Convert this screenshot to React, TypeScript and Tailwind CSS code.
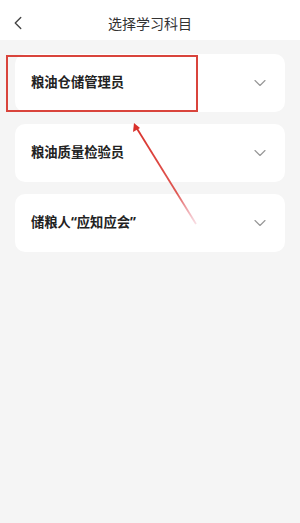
import { ChevronDown, ChevronLeft } from "lucide-react";

const subjects = ["粮油仓储管理员", "粮油质量检验员", "储粮人“应知应会”"];

export default function App() {
  return (
    <div
      className="relative w-full min-h-[523px] bg-[#f5f5f5]"
      style={{ fontFamily: '"Noto Sans", "Noto Sans CJK SC", sans-serif' }}
    >
      <div className="relative h-[40px] bg-white flex items-center justify-center">
        <ChevronLeft className="absolute left-[7px] top-[12px] w-[22px] h-[22px] text-[#444]" strokeWidth={1.5} />
        <span className="text-[14px] text-[#333] mt-[6px]">选择学习科目</span>
      </div>

      <div className="flex flex-col gap-[12px] px-[15px] pt-[14px]">
        {subjects.map((s) => (
          <div key={s} className="h-[58px] rounded-[10px] bg-white flex items-center justify-between pl-[16px] pr-[15px]">
            <span className="text-[13.3px] font-bold text-[#222]">{s}</span>
            <ChevronDown className="w-[20px] h-[20px] text-[#999]" strokeWidth={1.4} />
          </div>
        ))}
      </div>

      {/* annotation: red box + arrow */}
      <div className="absolute left-[6px] top-[55px] w-[192px] h-[57px] border-2 border-[#d9443c]" />
      <svg className="absolute left-0 top-0 pointer-events-none" width="300" height="523">
        <defs>
          <linearGradient id="fade" x1="134" y1="123" x2="196" y2="224" gradientUnits="userSpaceOnUse">
            <stop offset="0" stopColor="#d9302a" stopOpacity="1" />
            <stop offset="0.7" stopColor="#d9302a" stopOpacity="0.8" />
            <stop offset="1" stopColor="#e0607a" stopOpacity="0.2" />
          </linearGradient>
        </defs>
        <line x1="136" y1="127" x2="196" y2="224" stroke="url(#fade)" strokeWidth="1.8" />
        <polygon points="134,123 133,132 140,128" fill="#d9302a" />
      </svg>
    </div>
  );
}
